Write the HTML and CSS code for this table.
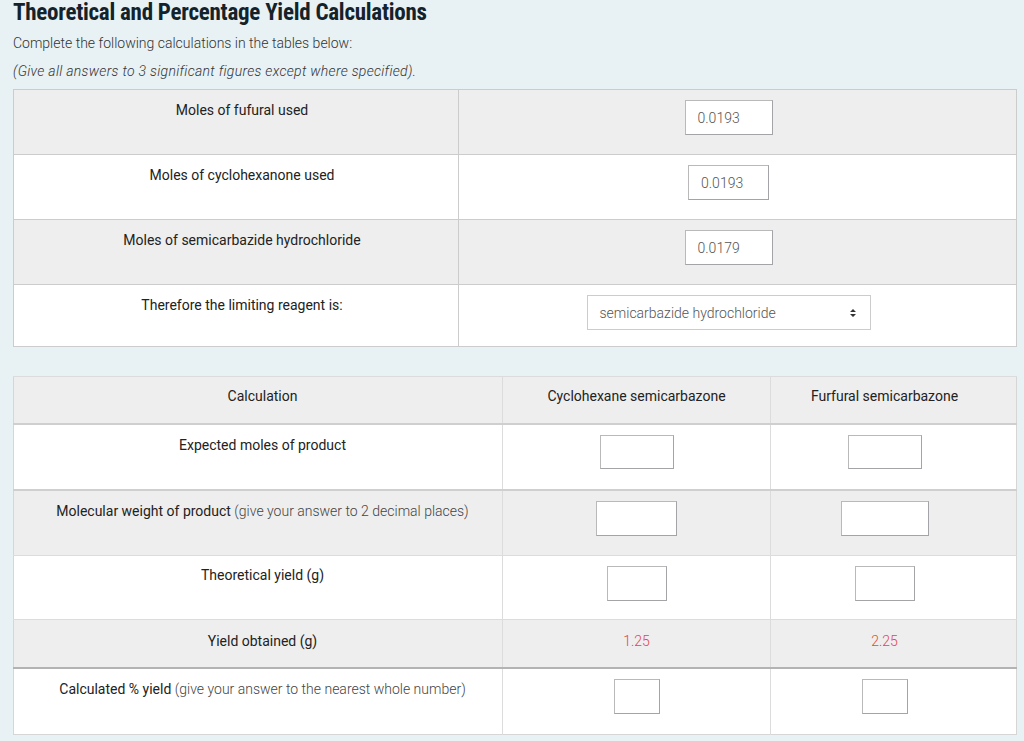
FILE: index.html
```html
<!DOCTYPE html>
<html lang="en">
<head>
<meta charset="utf-8">
<title>Theoretical and Percentage Yield Calculations</title>
<link rel="stylesheet" href="styles.css">
</head>
<body>
<div class="page">
  <h1 class="title">Theoretical and Percentage Yield Calculations</h1>
  <p class="intro">Complete the following calculations in the tables below:</p>
  <p class="intro italic">(Give all answers to 3 significant figures except where specified).</p>

  <table class="t1">
    <colgroup><col class="t1-c1"><col></colgroup>
    <tr class="grey">
      <td>Moles of fufural used</td>
      <td><input class="box w88" type="text" value="0.0193"></td>
    </tr>
    <tr>
      <td>Moles of cyclohexanone used</td>
      <td><input class="box w81" type="text" value="0.0193"></td>
    </tr>
    <tr class="grey">
      <td>Moles of semicarbazide hydrochloride</td>
      <td><input class="box w88" type="text" value="0.0179"></td>
    </tr>
    <tr class="last">
      <td>Therefore the limiting reagent is:</td>
      <td>
        <div class="select">
          <span>semicarbazide hydrochloride</span>
          <svg class="arrows" width="8" height="10" viewBox="0 0 8 10"><path d="M4 1 L7 4 H1 Z M1 6 H7 L4 9 Z" fill="#333"/></svg>
        </div>
      </td>
    </tr>
  </table>

  <table class="t2">
    <colgroup><col class="t2-c1"><col class="t2-c2"><col></colgroup>
    <tr class="grey head">
      <td>Calculation</td>
      <td>Cyclohexane semicarbazone</td>
      <td>Furfural semicarbazone</td>
    </tr>
    <tr class="r1">
      <td>Expected moles of product</td>
      <td><input class="box w74" type="text"></td>
      <td><input class="box w74" type="text"></td>
    </tr>
    <tr class="grey r2">
      <td><span class="strong">Molecular weight of product</span> <span class="light">(give your answer to 2 decimal places)</span></td>
      <td><input class="box w81" type="text"></td>
      <td><input class="box w88" type="text"></td>
    </tr>
    <tr class="r3">
      <td>Theoretical yield (g)</td>
      <td><input class="box w60" type="text"></td>
      <td><input class="box w60" type="text"></td>
    </tr>
    <tr class="grey r4">
      <td>Yield obtained (g)</td>
      <td class="given">1.25</td>
      <td class="given">2.25</td>
    </tr>
    <tr class="r5">
      <td><span class="strong">Calculated % yield</span> <span class="light">(give your answer to the nearest whole number)</span></td>
      <td><input class="box w46" type="text"></td>
      <td><input class="box w46" type="text"></td>
    </tr>
  </table>
</div>
</body>
</html>
```

FILE: styles.css
```css
html, body {
  margin: 0;
  padding: 0;
  background: #e8f1f4;
}

body {
  font-family: Roboto, "Liberation Sans", sans-serif;
  color: #222;
  font-size: 14px;
}

.page {
  padding: 0 7px 0 13px;
}

.title {
  margin: 0;
  padding-top: 1px;
  font-family: "Roboto Condensed", "Liberation Sans Narrow", "DejaVu Sans Condensed", Roboto, sans-serif;
  font-weight: 700;
  font-size: 23px;
  line-height: 24px;
  color: #14232b;
  letter-spacing: -0.25px;
}

.intro {
  margin: 8px 0 0;
  font-weight: 300;
  font-size: 14px;
  line-height: 20px;
  color: #333;
}

.italic {
  font-style: italic;
  margin-top: 8px;
  letter-spacing: 0.3px;
}

table {
  border-collapse: collapse;
  width: 1004px;
  table-layout: fixed;
  background: #fff;
}

td {
  text-align: center;
  vertical-align: top;
  padding: 10px 0 0 12px;
  line-height: 20px;
  font-size: 14px;
  color: #222;
}

.grey td {
  background: #eeeeee;
}

/* table 1 */
.t1 {
  margin-top: 8px;
  border: 1px solid #cccccc;
}

.t1-c1 {
  width: 445px;
}

.t1 td {
  height: 54px;
  border-top: 1px solid #cccccc;
}

.t1 td:first-child {
  border-right: 1px solid #cccccc;
}

.t1 td:last-child {
  padding-left: 0;
  padding-right: 18px;
}

.t1 tr.last td {
  height: 51px;
}

/* inputs */
.box {
  box-sizing: border-box;
  height: 35px;
  border: 1px solid #b9b9b9;
  border-bottom-color: #a4a4a8;
  border-right-color: #a4a4a8;
  background: #fff;
  font-family: Roboto, "Liberation Sans", sans-serif;
  font-weight: 300;
  font-size: 14px;
  color: #555;
  padding: 0 12px;
  margin: 0;
  vertical-align: top;
}

.w88 { width: 88px; }
.w81 { width: 81px; }
.w74 { width: 74px; height: 34px; }
.w60 { width: 60px; }
.w46 { width: 46px; }

.select {
  display: inline-flex;
  align-items: center;
  justify-content: space-between;
  box-sizing: border-box;
  width: 284px;
  height: 35px;
  padding: 0 13px 0 12px;
  border: 1px solid #cccccc;
  background: #fff;
  font-weight: 300;
  color: #555;
}

.arrows {
  display: block;
}

/* table 2 */
.t2 {
  margin-top: 29px;
  border: 1px solid #d6d6d6;
}

.t2-c1 { width: 489px; }
.t2-c2 { width: 268px; }

.t2 td {
  border-left: 1px solid #dcdcdc;
  border-top: 1px solid #dcdcdc;
}

.t2 td:first-child {
  border-left: none;
  padding-left: 9px;
}

.t2 td:nth-child(2) {
  padding-left: 0;
}

.t2 td:nth-child(3) {
  padding-left: 0;
  padding-right: 18px;
}

.t2 .head td {
  height: 37px;
  padding-top: 9px;
  border-bottom: 2px solid #cfcfcf;
}

.t2 .r1 td {
  height: 54px;
  padding-top: 10px;
  border-bottom: 2px solid #cfcfcf;
}

.t2 .r2 td { height: 54px; padding-top: 10px; }
.t2 .r3 td { height: 54px; padding-top: 9px; }

.t2 .r4 td {
  height: 36px;
  padding-top: 11px;
  border-bottom: 2px solid #b3b3b3;
}

.t2 .r5 td {
  height: 55px;
  padding-top: 10px;
}

.t2 .r3 td:not(:first-child) .box { margin-top: 1px; }

.strong {
  font-weight: 400;
}

.light {
  font-weight: 300;
  color: #444;
}

.given {
  font-weight: 300;
  color: #e4493b;
}
```
